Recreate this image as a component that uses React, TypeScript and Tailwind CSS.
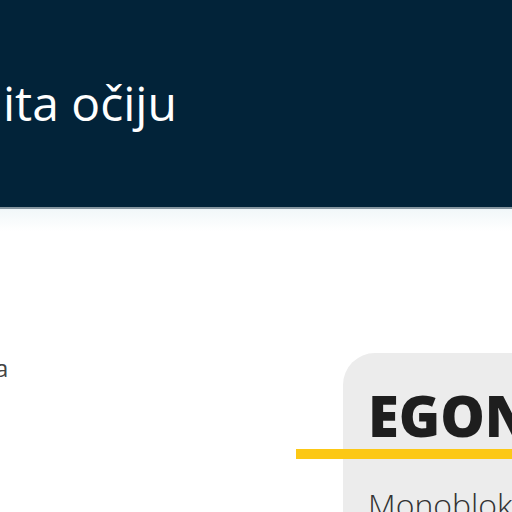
export default function App() {
  return (
    <div className="w-[512px] h-[512px] overflow-hidden bg-white font-['Open_Sans',sans-serif] flex flex-col">
      <header className="h-[209px] shrink-0 bg-[#022339] border-b-2 border-[#8696a0]">
        <h1 className="pt-[79px] pl-[3px] text-[48px] leading-none font-normal text-white whitespace-nowrap">
          ita očiju
        </h1>
      </header>
      <div className="h-[22px] shrink-0 bg-gradient-to-b from-[#f1f7f9] to-white" />
      <main className="flex flex-1 items-start">
        <div className="w-[343px] shrink-0 overflow-hidden pt-[125px]">
          <p className="-ml-[5px] text-[24px] leading-none text-[#444444]">a</p>
        </div>
        <section className="flex-1 min-w-0 mt-[122px] bg-[#ececec] rounded-tl-[32px] pt-[34px] pl-[25px] h-[300px] whitespace-nowrap">
          <h2 className="text-[56px] leading-none font-extrabold text-[#1e1e1e]">EGON</h2>
          <div className="-ml-[72px] mt-[6px] h-[10px] w-[300px] bg-[#fcc815]" />
          <p className="mt-[30px] text-[32px] leading-none font-light text-[#333333]">Monoblok</p>
        </section>
      </main>
    </div>
  );
}
